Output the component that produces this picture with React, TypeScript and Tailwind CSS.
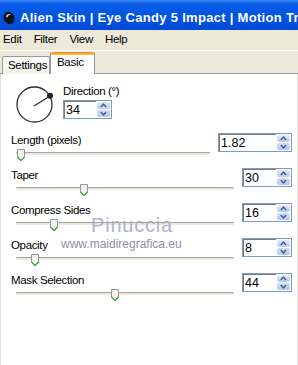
const font = "font-['Liberation_Sans',Arial,sans-serif]";

function Arrow({ up }: { up: boolean }) {
  return (
    <svg width="7" height="5" viewBox="0 0 7 5" className="block">
      <path
        d={up ? "M0.8 4 L3.5 1.2 L6.2 4" : "M0.8 1 L3.5 3.8 L6.2 1"}
        fill="none"
        stroke="#4D6185"
        strokeWidth="1.5"
      />
    </svg>
  );
}

function SpinBox({ value, w }: { value: string; w: string }) {
  return (
    <div className={`flex h-[19px] ${w} shrink-0 border border-[#7F9DB9] bg-white`}>
      <div className="flex-1 border-t border-l border-[#7A7A72] pl-[1px] text-[12.5px] leading-[16px] text-black">
        {value}
      </div>
      <div className="flex w-[15px] flex-col gap-[1px] p-[1px]">
        <div className="flex flex-1 items-center justify-center rounded-[2px] bg-[linear-gradient(to_bottom,#E2EBFD,#B9CCF6)]">
          <Arrow up />
        </div>
        <div className="flex flex-1 items-center justify-center rounded-[2px] bg-[linear-gradient(to_bottom,#D3E0FB,#B2C6F4)]">
          <Arrow up={false} />
        </div>
      </div>
    </div>
  );
}

function Thumb() {
  return (
    <svg width="8" height="13" viewBox="0 0 8 13" className="block">
      <path d="M0.5 8.5 V0.5 H7.5 V8.5 L4 12 Z" fill="#F4F4EE" stroke="#8C9A9C" strokeWidth="1" />
      <path d="M0.5 8 L4 11.5 L7.5 8" fill="none" stroke="#3FA33F" strokeWidth="1.2" />
    </svg>
  );
}

function SliderRow({
  label,
  value,
  pos,
  boxW,
}: {
  label: string;
  value: string;
  pos: string;
  boxW: string;
}) {
  return (
    <div className="flex h-[35px] items-start">
      <div className="mr-[8px] flex flex-1 flex-col">
        <div className="ml-[10px] h-[14px] leading-[14px] text-[11.5px] tracking-[-0.35px] text-black">{label}</div>
        <div className="relative ml-[15px] mt-[2px] h-[13px]">
          <div className="absolute left-0 right-0 top-[3px] h-[3px] rounded-[1px] border-t border-[#A5A59D] bg-[#EBE9DF]" />
          <div className={`absolute top-0 ${pos}`}>
            <Thumb />
          </div>
        </div>
      </div>
      <SpinBox value={value} w={boxW} />
    </div>
  );
}

export default function App() {
  return (
    <div className={`h-[365px] w-[298px] overflow-hidden bg-white ${font}`}>
      {/* title bar */}
      <div className="flex h-[30px] items-center overflow-hidden whitespace-nowrap bg-[linear-gradient(to_bottom,#3D8CF5_0%,#0A5CE8_12%,#0054E3_55%,#0049D6_100%)] pl-[3px] pt-[6px]">
        <svg width="12" height="14" viewBox="0 0 12 14" className="mr-[5px] shrink-0">
          <ellipse cx="6" cy="7" rx="5.3" ry="6.3" transform="rotate(-25 6 7)" fill="#111" />
          <path d="M3 5.5 C4 3 6.5 2.5 8 3.5 C6.5 3.8 5 4.5 4.2 6.5 Z" fill="#E8E8E8" />
        </svg>
        <span className="text-[13px] font-bold tracking-[0.3px] text-white">Alien Skin | Eye Candy 5 Impact | Motion Tra</span>
      </div>

      {/* menu bar */}
      <div className="flex h-[21px] items-center gap-[12px] border-b border-white bg-[#ECE9D8] pl-[3px] text-[11.5px] tracking-[-0.3px] text-black">
        <span>Edit</span>
        <span>Filter</span>
        <span>View</span>
        <span>Help</span>
      </div>

      {/* tabs */}
      <div className="flex h-[23px] items-end border-b border-[#919B9C] bg-[#ECE9D8] pl-[2px] text-[11.5px] tracking-[-0.3px] text-black">
        <div className="mb-[-1px] flex h-[18px] w-[48px] items-center rounded-t-[2px] border border-b-0 border-[#919B9C] bg-[linear-gradient(to_bottom,#FFFFFF,#F1F0EA)] pl-[5px]">
          Settings
        </div>
        <div className="mb-[-1px] flex h-[22px] w-[45px] flex-col rounded-t-[2px] border-x border-[#919B9C] bg-white">
          <div className="h-[3px] rounded-t-[2px] bg-[linear-gradient(to_bottom,#E68B2C,#FFC73C)]" />
          <div className="pl-[6px] leading-[15px]">Basic</div>
        </div>
      </div>

      {/* panel */}
      <div className="relative h-[291px] border-x border-[#E4E2DA] pr-[5px]">
        <div className="flex h-[59px]">
          <svg width="40" height="38" viewBox="0 0 40 38" className="ml-[14px] mt-[12px] shrink-0">
            <circle cx="19.5" cy="18.5" r="17.5" fill="none" stroke="#2E2E2E" strokeWidth="1.3" />
            <line x1="19" y1="20" x2="35" y2="10" stroke="#2E2E2E" strokeWidth="1.3" />
            <circle cx="35" cy="9.8" r="3" fill="#222" />
          </svg>
          <div className="ml-[8px] mt-[10px] flex flex-col gap-[2px]">
            <div className="h-[14px] text-[11.5px] leading-[14px] tracking-[-0.35px] text-black">Direction (°)</div>
            <SpinBox value="34" w="w-[49px]" />
          </div>
        </div>

        <SliderRow label="Length (pixels)" value="1.82" pos="left-[1px]" boxW="w-[74px]" />
        <SliderRow label="Taper" value="30" pos="left-[64px]" boxW="w-[50px]" />
        <SliderRow label="Compress Sides" value="16" pos="left-[34px]" boxW="w-[50px]" />
        <SliderRow label="Opacity" value="8" pos="left-[15px]" boxW="w-[50px]" />
        <SliderRow label="Mask Selection" value="44" pos="left-[95px]" boxW="w-[50px]" />

        {/* watermark */}
        <div className="pointer-events-none absolute left-[90px] top-[141px] text-[20px] leading-[20px] tracking-[0.8px] text-[#A7ACC6] opacity-90">
          Pinuccia
        </div>
        <div className="pointer-events-none absolute left-[60px] top-[164px] text-[12px] leading-[12px] text-[#8F8F9E]">
          www.maidiregrafica.eu
        </div>
      </div>
    </div>
  );
}
